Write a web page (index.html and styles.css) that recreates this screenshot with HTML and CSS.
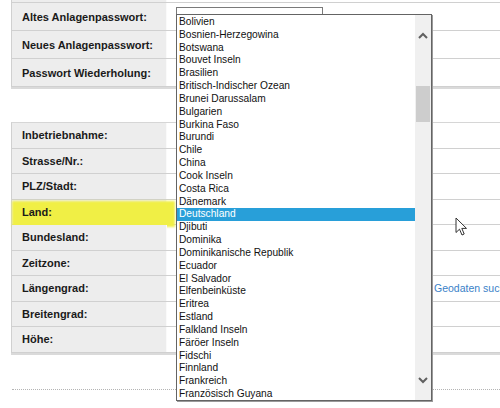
FILE: index.html
```html
<!DOCTYPE html>
<html lang="de">
<head>
  <meta charset="UTF-8" />
  <title>Anlage</title>
  <link rel="stylesheet" href="styles.css">
</head>
<body>

<!-- Passwort -->
<div class="panel panel-pass">
  <div class="row"><div class="label"></div><div class="value"></div></div>
  <div class="row">
    <div class="label">Altes Anlagenpasswort:</div>
    <div class="value"><span class="field"></span></div>
  </div>
  <div class="row">
    <div class="label">Neues Anlagenpasswort:</div>
    <div class="value"><span class="field"></span></div>
  </div>
  <div class="row">
    <div class="label">Passwort Wiederholung:</div>
    <div class="value"><span class="field"></span></div>
  </div>
</div>

<!-- Standort -->
<div class="panel panel-site">
  <div class="row"><div class="label">Inbetriebnahme:</div><div class="value"></div></div>
  <div class="row"><div class="label">Strasse/Nr.:</div><div class="value"></div></div>
  <div class="row"><div class="label">PLZ/Stadt:</div><div class="value"></div></div>
  <div class="row marked"><div class="label">Land:</div><div class="value"></div></div>
  <div class="row"><div class="label">Bundesland:</div><div class="value"></div></div>
  <div class="row"><div class="label">Zeitzone:</div><div class="value"></div></div>
  <div class="row">
    <div class="label">Längengrad:</div>
    <div class="value"><span class="field"></span><a href="#" class="geo-link">Geodaten suchen</a></div>
  </div>
  <div class="row"><div class="label">Breitengrad:</div><div class="value"></div></div>
  <div class="row"><div class="label">Höhe:</div><div class="value"></div></div>
</div>

<div class="dots"></div>

<!-- Aufgeklappte Länderliste -->
<div class="dropdown">
  <ul class="options">
    <li>Bolivien</li>
    <li>Bosnien-Herzegowina</li>
    <li>Botswana</li>
    <li>Bouvet Inseln</li>
    <li>Brasilien</li>
    <li>Britisch-Indischer Ozean</li>
    <li>Brunei Darussalam</li>
    <li>Bulgarien</li>
    <li>Burkina Faso</li>
    <li>Burundi</li>
    <li>Chile</li>
    <li>China</li>
    <li>Cook Inseln</li>
    <li>Costa Rica</li>
    <li>Dänemark</li>
    <li class="selected">Deutschland</li>
    <li>Djibuti</li>
    <li>Dominika</li>
    <li>Dominikanische Republik</li>
    <li>Ecuador</li>
    <li>El Salvador</li>
    <li>Elfenbeinküste</li>
    <li>Eritrea</li>
    <li>Estland</li>
    <li>Falkland Inseln</li>
    <li>Färöer Inseln</li>
    <li>Fidschi</li>
    <li>Finnland</li>
    <li>Frankreich</li>
    <li>Französisch Guyana</li>
  </ul>
  <div class="scrollbar">
    <svg class="arrow" width="10" height="7" viewBox="0 0 10 7"><path d="M1 6 L5 2 L9 6" fill="none" stroke="#606060" stroke-width="2"/></svg>
    <div class="track"><div class="thumb"></div></div>
    <svg class="arrow" width="10" height="7" viewBox="0 0 10 7"><path d="M1 1 L5 5 L9 1" fill="none" stroke="#606060" stroke-width="2"/></svg>
  </div>
</div>

<!-- Mauszeiger -->
<svg class="cursor" width="13" height="20" viewBox="0 0 13 20">
  <path d="M1 1 L1 15.5 L4.5 12.2 L7 18 L9.2 17 L6.8 11.4 L11.5 11.4 Z" fill="#fff" stroke="#333" stroke-width="1" stroke-linejoin="round"/>
</svg>

</body>
</html>
```

FILE: styles.css
```css
* {
  box-sizing: border-box;
  margin: 0;
  padding: 0;
}

body {
  width: 500px;
  height: 408px;
  overflow: hidden;
  position: relative;
  background: #fff;
  font-family: "Liberation Sans", Arial, sans-serif;
  font-size: 11px;
  color: #1a1a1a;
}

.panel {
  margin-left: 11px;
  width: 560px;
  border-left: 1px solid #d0d0d0;
  border-top: 1px solid #d6d6d6;
  box-shadow: 0 2px 0 #dadada;
}

.panel-pass {
  margin-top: -26px;
}

.panel-site {
  margin-top: 35px;
}

.row {
  display: flex;
  height: 28px;
  border-bottom: 1px solid #d0d0d0;
}

.panel-site .row {
  height: 25.5px;
}

.label {
  width: 155px;
  padding-left: 10px;
  display: flex;
  align-items: center;
  background: #ededed;
  border-right: 1px solid #fafafa;
  font-weight: bold;
  position: relative;
}

.value {
  flex: 1;
  display: flex;
  align-items: center;
  padding-left: 9px;
}

.field {
  width: 147px;
  height: 20px;
  border: 1px solid #7a7a7a;
  background: #fff;
}

.geo-link {
  margin-left: 111px;
  color: #3a7fc8;
  text-decoration: none;
  font-size: 10.5px;
  white-space: nowrap;
}

/* Markierung */
.marked .label {
  isolation: isolate;
}

.marked .label::before {
  content: "";
  position: absolute;
  z-index: -1;
  left: 0;
  right: -9px;
  top: 1px;
  bottom: -3px;
  background: #f0ef45;
  filter: blur(1px);
}

.dots {
  margin: 36px 0 0 12px;
  border-top: 1px dotted #b4b4b4;
}

.dropdown {
  position: absolute;
  left: 176px;
  top: 14px;
  width: 256px;
  height: 387px;
  background: #fff;
  border: 1px solid #646464;
  box-shadow: 1px 1px 0 #9a9a9a;
  overflow: hidden;
  display: flex;
}

.options {
  list-style: none;
  flex: 1;
  padding-top: 1px;
  font-size: 10.2px;
  color: #111;
}

.options li {
  height: 12.83px;
  line-height: 12.83px;
  padding-left: 2px;
  white-space: nowrap;
}

.options li.selected {
  background: #289fd9;
  color: #fff;
}

.scrollbar {
  width: 16px;
  background: #f0f0f0;
  display: flex;
  flex-direction: column;
  align-items: center;
  padding: 17px 0 16px;
}

.track {
  flex: 1;
  align-self: stretch;
  padding: 0 1px;
}

.thumb {
  margin-top: 47px;
  height: 36px;
  background: #cdcdcd;
}

.cursor {
  position: absolute;
  left: 455px;
  top: 217px;
}
```
